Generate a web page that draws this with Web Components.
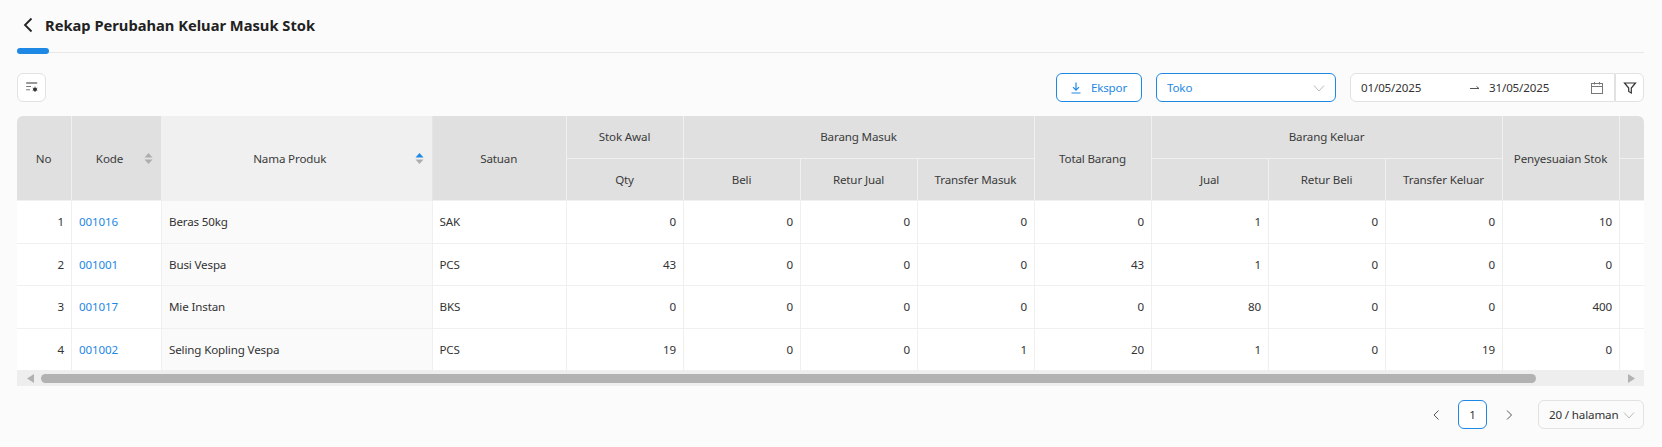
<!doctype html>
<html>
<head>
<meta charset="utf-8">
<style>
  html, body { margin: 0; background: #fbfbfb; }
  body { font-family: "Noto Sans", sans-serif; font-size: 11.6px; letter-spacing: -0.15px; color: #333; height: 447px; overflow: hidden; }
</style>
</head>
<body>
<stock-report-page>
  <page-header slot="header" title-text="Rekap Perubahan Keluar Masuk Stok"></page-header>
  <report-toolbar slot="toolbar"></report-toolbar>
  <stock-table slot="table"></stock-table>
  <table-pagination slot="pagination"></table-pagination>
</stock-report-page>

<script>
const rows = [
  [1, '001016', 'Beras 50kg', 'SAK', 0, 0, 0, 0, 0, 1, 0, 0, 10],
  [2, '001001', 'Busi Vespa', 'PCS', 43, 0, 0, 0, 43, 1, 0, 0, 0],
  [3, '001017', 'Mie Instan', 'BKS', 0, 0, 0, 0, 0, 80, 0, 0, 400],
  [4, '001002', 'Seling Kopling Vespa', 'PCS', 19, 0, 0, 1, 20, 1, 0, 19, 0]
];

const chevron = (d, size = 12, color = '#bbb') =>
  `<svg width="${size}" height="${size}" viewBox="0 0 12 12" fill="none" stroke="${color}" stroke-width="1"><path d="${d}"/></svg>`;

class StockReportPage extends HTMLElement {
  connectedCallback() {
    const root = this.attachShadow({ mode: 'open' });
    root.innerHTML = `
      <style>
        :host { display: flex; flex-direction: column; padding: 0 18px 0 17px; height: 447px; box-sizing: border-box; }
      </style>
      <slot name="header"></slot>
      <slot name="toolbar"></slot>
      <slot name="table"></slot>
      <slot name="pagination"></slot>`;
  }
}

class PageHeader extends HTMLElement {
  connectedCallback() {
    const root = this.attachShadow({ mode: 'open' });
    root.innerHTML = `
      <style>
        :host { display: block; height: 53px; box-sizing: border-box; border-bottom: 1px solid #e8e8e8; position: relative; }
        .row { display: flex; align-items: center; gap: 12px; height: 51px; padding-left: 4px; box-sizing: border-box; padding-bottom: 1px; }
        svg { display: block; }
        h1 { margin: 0; font-size: 14.7px; font-weight: 700; letter-spacing: 0; color: #222; line-height: 20px; }
        .ink { position: absolute; left: 0; bottom: -2px; width: 32px; height: 6px; border-radius: 3px; background: #1e88e5; }
      </style>
      <div class="row">
        <svg width="12" height="18" viewBox="0 0 12 18" fill="none" stroke="#222" stroke-width="1.8"><path d="M10.5 2.5 L4 9 L10.5 15.5"/></svg>
        <h1>${this.getAttribute('title-text')}</h1>
      </div>
      <div class="ink"></div>`;
  }
}

class ReportToolbar extends HTMLElement {
  connectedCallback() {
    const root = this.attachShadow({ mode: 'open' });
    root.innerHTML = `
      <style>
        :host { display: flex; align-items: center; height: 29px; margin-top: 20px; margin-bottom: 14px; }
        .box { box-sizing: border-box; height: 29px; border-radius: 6px; background: #fff; display: flex; align-items: center; }
        .grey { border: 1px solid #e2e2e2; }
        .blue { border: 1px solid #1e88e5; color: #1e88e5; }
        .settings { width: 29px; justify-content: center; }
        .spacer { flex: 1; }
        .export { width: 86px; justify-content: center; gap: 10px; margin-right: 14px; }
        .select { width: 180px; padding: 0 10px; justify-content: space-between; margin-right: 14px; }
        .range { width: 265px; padding: 0 10px; border-radius: 6px 0 0 6px; color: #333; }
        .range .from { width: 104px; }
        .range .arrow { width: 19px; margin-right: 5px; }
        .range .to { flex: 1; }
        .filter { width: 29px; justify-content: center; border-left: 1px solid #e2e2e2; border-radius: 0 6px 6px 0; }
        svg { display: block; }
      </style>
      <div class="box grey settings">
        <svg width="14" height="14" viewBox="0 0 14 14" fill="none">
          <path d="M1.2 2H12.2" stroke="#333"/>
          <path d="M1.2 5.5H6M1.2 8.8H5" stroke="#777"/>
          <circle cx="10" cy="8.3" r="1.9" fill="#333"/>
          <path d="M10 5.6v1M10 10v1M7.7 7l.9.5M11.4 9.1l.9.5M7.7 9.6l.9-.5M11.4 7.5l.9-.5" stroke="#333" stroke-width=".8"/>
        </svg>
      </div>
      <div class="spacer"></div>
      <div class="box blue export">
        <svg width="10" height="12" viewBox="0 0 10 12" fill="none" stroke="#1e88e5" stroke-width="1.2"><path d="M5 .5V8M2 5.2L5 8.2L8 5.2M.5 11H9.5"/></svg>
        <span>Ekspor</span>
      </div>
      <div class="box blue select">
        <span>Toko</span>
        ${chevron('M1 3.5L6 9L11 3.5')}
      </div>
      <div class="box grey range">
        <span class="from">01/05/2025</span>
        <svg class="arrow" width="19" height="8" viewBox="0 0 19 8" fill="none" stroke="#555" stroke-width="1"><path d="M5 4.5H14M11.5 2.5L14 4.5"/></svg>
        <span class="to">31/05/2025</span>
        <svg width="14" height="14" viewBox="0 0 14 14" fill="none" stroke="#777" stroke-width="1"><rect x="1.5" y="2.5" width="11" height="10"/><path d="M1.5 5.5H12.5M4.5 1V3.5M9.5 1V3.5"/></svg>
      </div>
      <div class="box grey filter">
        <svg width="14" height="14" viewBox="0 0 14 14" fill="none" stroke="#333" stroke-width="1.2"><path d="M1.5 2H12.5L8.3 7V12L5.7 10.5V7Z"/></svg>
      </div>`;
  }
}

class StockTable extends HTMLElement {
  connectedCallback() {
    const root = this.attachShadow({ mode: 'open' });
    const sorter = (up) => `<svg class="sort" width="9" height="13" viewBox="0 0 9 13"><path d="M4.5 1L8.5 5.5H.5Z" fill="${up}"/><path d="M4.5 12L.5 7.5H8.5Z" fill="#adadad"/></svg>`;
    const body = rows.map((row) => `<tr>
      <td class="num">${row[0]}</td>
      <td><a>${row[1]}</a></td>
      <td class="sorted">${row[2]}</td>
      <td>${row[3]}</td>
      ${row.slice(4).map((value) => `<td class="num">${value}</td>`).join('')}
      <td></td>
    </tr>`).join('');
    root.innerHTML = `
      <style>
        :host { display: block; }
        .wrap { overflow: hidden; border-radius: 6px 6px 0 0; }
        table { border-collapse: separate; border-spacing: 0; table-layout: fixed; width: 1720px; }
        th, td { box-sizing: border-box; border-right: 1px solid #f0f0f0; border-bottom: 1px solid #f0f0f0; padding: 0 7px; }
        th { background: #e0e0e0; font-weight: 400; color: #3b3b3b; text-align: center; height: 42.5px; padding-right: 8px; }
        th.sorted { background: #f0f0f0; border-right-color: #e4e4e4; }
        th .cell { display: flex; align-items: center; padding-left: 1px; }
        th .cell span { flex: 1; padding-right: 5px; }
        td { background: #fff; height: 42.5px; color: #333; }
        td.sorted { background: #fafafa; }
        td.num { text-align: right; }
        a { color: #1e88e5; }
        tr:last-child td { border-bottom: 0; height: 41.5px; }
        svg { display: block; }
        .bar { display: flex; align-items: center; height: 16px; background: #eee; padding: 0 8px 0 9px; }
        .thumb { height: 9px; width: 1495px; background: #b2b2b2; border-radius: 5px; margin-left: 7px; }
        .space { flex: 1; }
      </style>
      <div class="wrap">
        <table>
          <colgroup>
            <col style="width:55px"><col style="width:90px"><col style="width:270.5px"><col style="width:134.5px">
            <col style="width:117px"><col style="width:117px"><col style="width:117px"><col style="width:117px">
            <col style="width:117px"><col style="width:117px"><col style="width:117px"><col style="width:117px">
            <col style="width:117px"><col style="width:117px">
          </colgroup>
          <thead>
            <tr>
              <th rowspan="2">No</th>
              <th rowspan="2"><div class="cell"><span>Kode</span>${sorter('#adadad')}</div></th>
              <th rowspan="2" class="sorted"><div class="cell"><span>Nama Produk</span>${sorter('#1e88e5')}</div></th>
              <th rowspan="2">Satuan</th>
              <th>Stok Awal</th>
              <th colspan="3">Barang Masuk</th>
              <th rowspan="2">Total Barang</th>
              <th colspan="3">Barang Keluar</th>
              <th rowspan="2">Penyesuaian Stok</th>
              <th></th>
            </tr>
            <tr>
              <th>Qty</th><th>Beli</th><th>Retur Jual</th><th>Transfer Masuk</th>
              <th>Jual</th><th>Retur Beli</th><th>Transfer Keluar</th><th></th>
            </tr>
          </thead>
          <tbody>${body}</tbody>
        </table>
      </div>
      <div class="bar">
        <svg width="8" height="9" viewBox="0 0 8 9"><path d="M1 4.5L8 0V9Z" fill="#b2b2b2"/></svg>
        <div class="thumb"></div>
        <div class="space"></div>
        <svg width="8" height="9" viewBox="0 0 8 9"><path d="M7 4.5L0 0V9Z" fill="#b2b2b2"/></svg>
      </div>`;
  }
}

class TablePagination extends HTMLElement {
  connectedCallback() {
    const root = this.attachShadow({ mode: 'open' });
    root.innerHTML = `
      <style>
        :host { display: flex; justify-content: flex-end; align-items: center; margin-top: 14px; height: 29px; }
        .nav { width: 29px; display: flex; justify-content: center; }
        .page { box-sizing: border-box; width: 29px; height: 29px; border: 1px solid #1e88e5; border-radius: 6px; background: #fff; display: flex; align-items: center; justify-content: center; margin: 0 8px; }
        .size { box-sizing: border-box; width: 106px; height: 29px; border: 1px solid #e2e2e2; border-radius: 6px; display: flex; align-items: center; justify-content: space-between; padding: 0 8px 0 10px; margin-left: 14px; }
        svg { display: block; }
      </style>
      <div class="nav">${chevron('M8.5 1.5L4 6L8.5 10.5', 12, '#555')}</div>
      <div class="page">1</div>
      <div class="nav">${chevron('M3 1.5L7.5 6L3 10.5', 12, '#555')}</div>
      <div class="size"><span>20 / halaman</span>${chevron('M1 3.5L6 9L11 3.5')}</div>`;
  }
}

customElements.define('stock-report-page', StockReportPage);
customElements.define('page-header', PageHeader);
customElements.define('report-toolbar', ReportToolbar);
customElements.define('stock-table', StockTable);
customElements.define('table-pagination', TablePagination);
</script>
</body>
</html>
